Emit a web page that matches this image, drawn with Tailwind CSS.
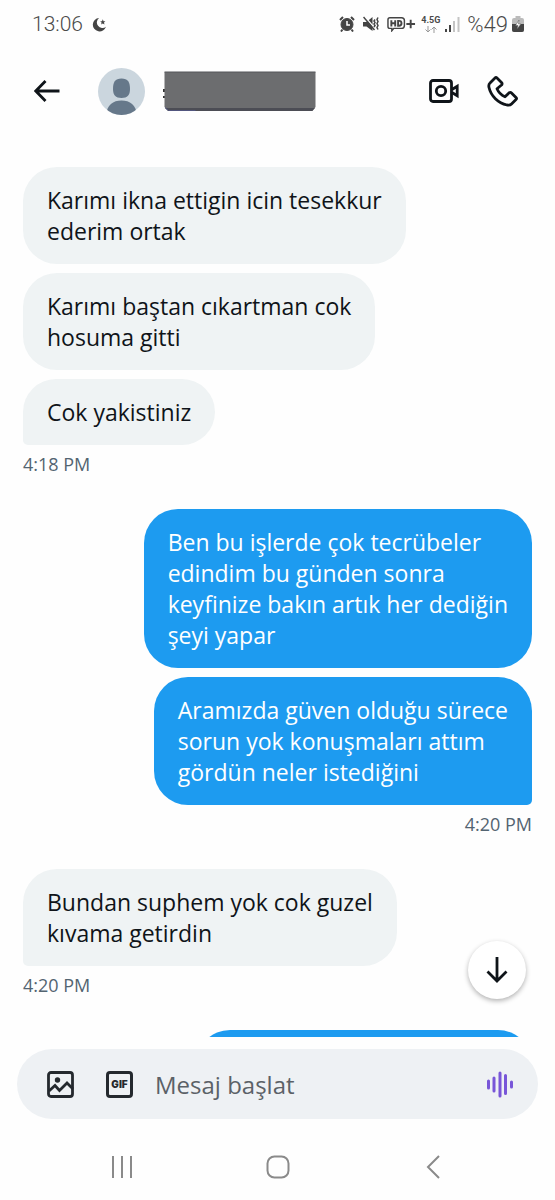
<!DOCTYPE html>
<html lang="tr">
<head>
<meta charset="utf-8">
<meta name="viewport" content="width=device-width, initial-scale=1">
<title>Mesajlar</title>
<script src="https://cdn.jsdelivr.net/npm/@tailwindcss/browser@4"></script>
</head>
<body class="flex h-screen flex-col overflow-hidden bg-[#fefefe] font-['Open_Sans',sans-serif] text-[#0f1419]">

<!-- Status bar -->
<div class="flex h-12 shrink-0 items-center justify-between pr-[31px] pl-8 font-[Roboto,sans-serif] text-[#4a4a4a]">
  <div class="flex items-center gap-[9px]">
    <span class="text-[21px] leading-6 font-light">13:06</span>
    <svg class="size-[15px]" viewBox="0 0 16 16" fill="#444"><path d="M7.500 1A7.200 7.200 0 1 0 14.900 10.500A5.200 5.200 0 0 1 7.500 1Z"/><path d="M11.500 2.500l.8 1.900 2 .2-1.500 1.300.5 2-1.800-1.100-1.700 1.100.4-2-1.500-1.300 2-.2z"/></svg>
  </div>
  <div class="flex items-center">
    <svg class="mr-2 h-4 w-4" viewBox="0 0 16 16" fill="none" stroke="#444"><circle cx="8" cy="8.500" r="6" fill="#444"/><path d="M1 4l3-3M15 4l-3-3" stroke-width="2"/><path d="M3.500 13.500L2 15.500M12.500 13.500L14 15.500" stroke-width="2"/><path d="M8 5v4h3" stroke="#fff" stroke-width="1.500"/></svg>
    <svg class="mr-[8px] h-4 w-4" viewBox="0 0 16 16" fill="none" stroke="#444" stroke-width="1.500"><path d="M0 6h3.500l6-5v14l-6-4.500H0z" fill="#444" stroke="none"/><path d="M2 1l10 11.500" stroke="#fff" stroke-width="1.500"/><path d="M.5 1l11 13"/><path d="M12 3.500l-1 1.500 1 1.500-1 1.500 1 1.500-1 1.500M15 1.500l-1 2 1 2-1 2 1 2-1 2 1 2"/></svg>
    <svg class="mr-[5px] h-4 w-[29px]" viewBox="0 0 30 16" fill="none" stroke="#444" stroke-width="2"><path d="M3 1.500h12q3 0 3 3v5q0 3-3 3H7l-2 2.500v-2.500H3q-2 0-2-2v-7q0-2 2-2z" stroke-width="1.500"/><path d="M4.500 4v6.500M8.500 4v6.500M4.500 7.200h4M11.500 4.800v5h1q2.500 0 2.500-2.500t-2.500-2.500zM24.500 3.500v9M20 8h9"/></svg>
    <div class="mr-[5px] flex h-5 flex-col items-center">
      <span class="text-[9px] leading-[12px] font-bold">4.5G</span>
      <svg class="h-[7px] w-3" viewBox="0 0 12 7" fill="none" stroke="#999"><path d="M3 0v6M.5 3.500L3 6l2.500-2.500M9 7V1M6.500 3.500L9 1l2.500 2.500"/></svg>
    </div>
    <svg class="mr-[7px] h-4 w-[15px]" viewBox="0 0 15 16"><path d="M0 13h2v3H0zM4 9h2v7H4z" fill="#444"/><path d="M8 5h2v11H8zM12.500 1h2v15h-2z" fill="#c4c4c4"/></svg>
    <span class="text-[22px] font-light">%49</span>
    <svg class="ml-1 h-4 w-3" viewBox="0 0 12 16"><path d="M3.500 0h5v2H10q2 0 2 2v10q0 2-2 2H2q-2 0-2-2V4q0-2 2-2h1.500z" fill="#bbb"/><path d="M0 8h12v6q0 2-2 2H2q-2 0-2-2z" fill="#444"/><path d="M7 4L3.500 9.500H6L5 13l4-5H6.500z" fill="#fff" stroke="#555" stroke-width=".5"/></svg>
  </div>
</div>

<!-- Conversation header -->
<header class="flex h-[86px] shrink-0 items-center pr-[37px] pl-[34px]">
  <button type="button" aria-label="Geri" class="mr-[38px]">
    <svg class="size-[26px]" viewBox="0 0 26 26" fill="none" stroke="#0f1419" stroke-width="2.800"><path d="M25.500 13H2M11.500 3L1.800 13l9.700 10"/></svg>
  </button>
  <svg class="mr-[18px] size-[47px]" viewBox="0 0 47 47"><defs><clipPath id="avatar"><circle cx="23.500" cy="23.500" r="23.500"/></clipPath></defs><g clip-path="url(#avatar)"><path d="M0 0h47v47H0z" fill="#cbd6de"/><path d="M23.500 10.500c6.500 0 8.500 4 8.500 10.500 0 6-2.500 9-8.500 9S15 27 15 21c0-6.500 2-10.500 8.500-10.500z" fill="#66788a"/><path d="M8 47c1-10 7-14.500 15.500-14.500S38 37 39 47z" fill="#66788a"/></g></svg>
  <svg class="h-10 w-[153px]" viewBox="0 0 153 40" role="img" aria-label="Gizlenmiş ad"><path d="M0 18h2v3H0zM0 25h2v2H0z" fill="#333"/><path d="M1.500 1h151v35l-3 4h-144l-4-4z" fill="#6c6d6f"/><path d="M2 37h150l-3 3H5z" fill="#4c4d55"/><path d="M2 36.500l3.500 3h27" fill="none" stroke="#51557e"/><path d="M1.500 1h151" stroke="#55565a"/></svg>
  <div class="ml-auto flex items-center gap-[28px]">
    <button type="button" aria-label="Görüntülü arama">
      <svg class="h-6 w-[30px]" viewBox="0 0 30 24" fill="none" stroke="#0f1419" stroke-width="2.800"><rect x="1.500" y="1.500" width="21" height="21" rx="2.500"/><circle cx="12" cy="12" r="4.700"/><path d="M23 10.500l5.200-3.200v9.400L23 13.500"/></svg>
    </button>
    <button type="button" aria-label="Sesli arama">
      <svg class="size-[31px]" viewBox="0 0 31 31" fill="none" stroke="#0f1419" stroke-width="2.800" stroke-linejoin="round"><path d="M8 2q1-1 2 0l4.500 4.500q1 1 .3 2.200L10 12.800c1.500 3.500 4.500 6.500 8 8l4.200-4.100q1.300-.8 2.300.2L29 21.500q1 1 0 2l-4.500 4.500q-1.500 1.500-4.500 1C11 27 4 20 2 11.500Q1.300 8.500 3 7z"/></svg>
    </button>
  </div>
</header>

<!-- Messages -->
<div class="relative min-h-0 flex-1">
  <main class="flex h-full flex-col overflow-hidden pt-[33px] pr-[23px] pl-[23px] text-[23px] leading-[31px]">
    <section class="mb-[35px] flex shrink-0 flex-col items-start gap-[9px]">
      <p class="rounded-[34px] bg-[#eff3f4] px-6 pt-[18px] pb-[17px]">Karımı ikna ettigin icin tesekkur<br>ederim ortak</p>
      <p class="rounded-[34px] bg-[#eff3f4] px-6 pt-[18px] pb-[17px]">Karımı baştan cıkartman cok<br>hosuma gitti</p>
      <p class="rounded-[34px] rounded-bl-[5px] bg-[#eff3f4] px-6 pt-[18px] pb-[17px]">Cok yakistiniz</p>
      <time class="text-[18px] leading-5 text-[#536471]">4:18 PM</time>
    </section>
    <section class="mb-[35px] flex shrink-0 flex-col items-end gap-[9px] text-white">
      <p class="rounded-[34px] bg-[#1d9bf0] px-6 pt-[18px] pb-[17px]">Ben bu işlerde çok tecrübeler<br>edindim bu günden sonra<br>keyfinize bakın artık her dediğin<br>şeyi yapar</p>
      <p class="rounded-[34px] rounded-br-[5px] bg-[#1d9bf0] px-6 pt-[18px] pb-[17px]">Aramızda güven olduğu sürece<br>sorun yok konuşmaları attım<br>gördün neler istediğini</p>
      <time class="text-[18px] leading-5 text-[#536471]">4:20 PM</time>
    </section>
    <section class="mb-[35px] flex shrink-0 flex-col items-start gap-[9px]">
      <p class="rounded-[34px] rounded-bl-[5px] bg-[#eff3f4] px-6 pt-[18px] pb-[17px]">Bundan suphem yok cok guzel<br>kıvama getirdin</p>
      <time class="text-[18px] leading-5 text-[#536471]">4:20 PM</time>
    </section>
    <div class="h-[97px] w-[336px] shrink-0 self-end rounded-[34px] bg-[#1d9bf0]"></div>
  </main>
  <button type="button" aria-label="En alta git" class="absolute right-[29px] bottom-[38px] flex size-[58px] items-center justify-center rounded-full bg-white shadow-[0_2px_5px_rgba(0,0,0,0.3)]">
    <svg class="h-[26px] w-[22px]" viewBox="0 0 22 26" fill="none" stroke="#0f1419" stroke-width="2.800"><path d="M11 0v24M1.500 14.500L11 24l9.500-9.500"/></svg>
  </button>
</div>

<!-- Composer -->
<form class="mx-[17px] mt-3 flex h-[70px] shrink-0 items-center rounded-full bg-[#eef1f4] pr-[25px] pl-[30px]">
  <button type="button" aria-label="Fotoğraf ekle" class="mr-8 shrink-0">
    <svg class="size-[27px]" viewBox="0 0 27 27" fill="none" stroke="#24292e" stroke-width="2.800"><rect x="1.500" y="1.500" width="24" height="24" rx="2.500"/><circle cx="10.500" cy="9" r="2.700" fill="#24292e" stroke="none"/><path d="M2 20l6-5.500 4.500 5L20 12l6 6"/></svg>
  </button>
  <button type="button" aria-label="GIF ekle" class="mr-[22px] flex size-[27px] shrink-0 items-center justify-center rounded-[4px] border-[3px] border-[#24292e] font-[Inter,sans-serif] text-[10px] leading-none font-black text-[#24292e]">GIF</button>
  <input type="text" aria-label="Mesaj" placeholder="Mesaj başlat" class="min-w-0 flex-1 bg-transparent text-[24px] leading-[31px] outline-none placeholder:text-[#5b6167]">
  <button type="button" aria-label="Sesli mesaj" class="shrink-0">
    <svg class="h-[27px] w-[26px]" viewBox="0 0 26 27" fill="none" stroke="#7856d8" stroke-width="3" stroke-linecap="round"><path d="M1.500 10v7M7 7v13M13 2v23M18.500 4.500v18M24.500 11v5"/></svg>
  </button>
</form>

<!-- System navigation -->
<nav class="flex h-[81px] shrink-0 items-center justify-between px-[110px] pt-[15px]">
  <button type="button" aria-label="Son uygulamalar" class="flex w-6 justify-center"><svg class="size-[22px]" viewBox="0 0 22 22" stroke="#8a8a8a" stroke-width="2"><path d="M2 0v22M11 0v22M20 0v22"/></svg></button>
  <button type="button" aria-label="Ana ekran" class="flex w-6 justify-center"><svg class="size-6" viewBox="0 0 24 24" fill="none" stroke="#8a8a8a" stroke-width="2"><rect x="1.500" y="1.500" width="21" height="21" rx="7"/></svg></button>
  <button type="button" aria-label="Geri" class="flex w-6 justify-center"><svg class="h-6 w-[14px]" viewBox="0 0 14 24" fill="none" stroke="#8a8a8a" stroke-width="2"><path d="M13 1L2 12l11 11"/></svg></button>
</nav>
</body>
</html>
